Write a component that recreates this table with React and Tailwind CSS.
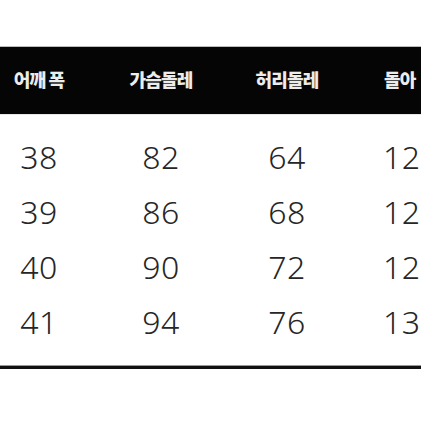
export default function App() {
  const headers = ["어깨 폭", "가슴돌레", "허리돌레", "돌아"];
  const rows = [
    ["38", "82", "64", "12"],
    ["39", "86", "68", "12"],
    ["40", "90", "72", "12"],
    ["41", "94", "76", "13"],
  ];
  const cols = "grid grid-cols-[78px_166px_86px_91px]";
  return (
    <div className="w-[421px] h-[421px] bg-white overflow-hidden pt-[46px]">
      <div className="h-[1px] bg-[#bbbbbb]" />
      <div className={`${cols} h-[67px] bg-[#050505] items-center pb-[3px]`} style={{ fontFamily: '"Noto Sans CJK KR", "Noto Sans", sans-serif' }}>
        {headers.map((h, i) => (
          <div
            key={i}
            className={`text-[18px] font-black text-[#ececec] whitespace-nowrap tracking-[-0.8px] ${i === 3 ? "pl-[54px] text-left" : "text-center"}`}
          >
            {h}
          </div>
        ))}
      </div>
      <div className="h-[1px] bg-[#e8e8e8]" />
      <div className="pt-[14px]" style={{ fontFamily: '"Noto Sans", sans-serif' }}>
        {rows.map((r, ri) => (
          <div key={ri} className={`${cols} h-[55px] items-center`}>
            {r.map((v, i) => (
              <div
                key={i}
                className={`text-[32px] font-light leading-none text-[#262626] whitespace-nowrap tracking-[0.5px] ${i === 3 ? "pl-[53px] text-left" : "text-center"}`}
              >
                {v}
              </div>
            ))}
          </div>
        ))}
      </div>
      <div className="mt-[16px] h-[1px] bg-[#9a9a9a]" />
      <div className="h-[3px] bg-[#111111]" />
    </div>
  );
}
